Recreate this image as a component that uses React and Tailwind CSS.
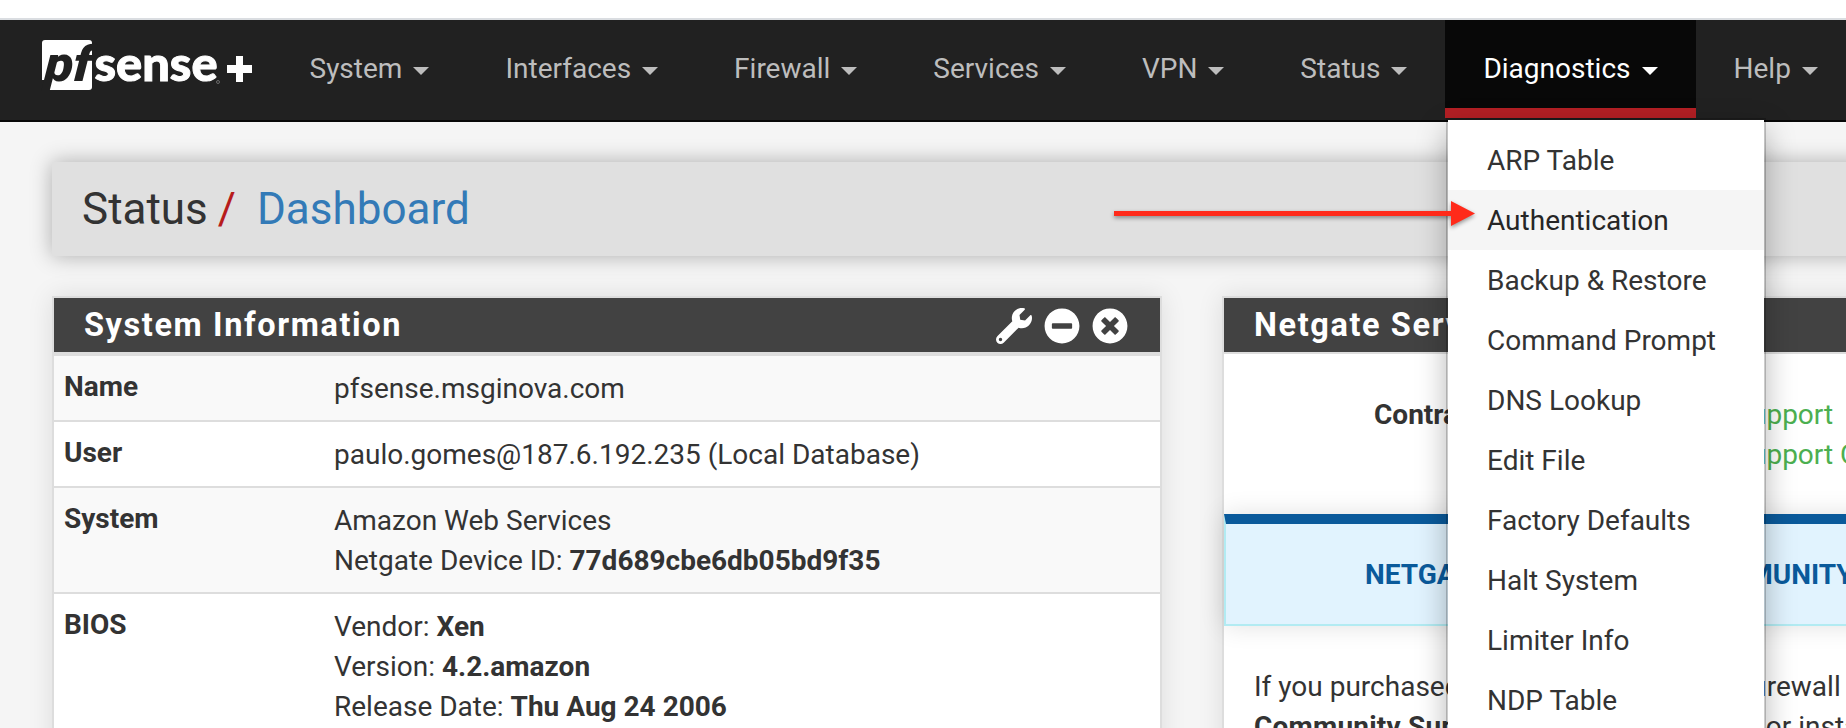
import { FaWrench, FaMinusCircle, FaTimesCircle } from "react-icons/fa";

const menu = [
  "ARP Table", "Authentication", "Backup & Restore", "Command Prompt", "DNS Lookup",
  "Edit File", "Factory Defaults", "Halt System", "Limiter Info", "NDP Table",
];

const nav = ["System", "Interfaces", "Firewall", "Services", "VPN", "Status", "Diagnostics", "Help"];

const Caret = () => (
  <span className="ml-[11px] mt-[4px] h-0 w-0 border-x-8 border-t-8 border-x-transparent border-t-current" />
);

function Logo() {
  return (
    <svg width="212" height="52" viewBox="0 0 212 52" className="mt-[19px] ml-[41px] shrink-0">
      <rect x="1" y="1" width="50" height="50" rx="3" fill="#fff" />
      <path d="M0 41 L5 41 L7 46 L6 52 L0 52 Z" fill="#212121" />
      <text transform="translate(3 42) skewX(-4)" fontFamily="Roboto, sans-serif" fontWeight="900" fontStyle="italic" fontSize="49" fill="#212121" textLength="47" lengthAdjust="spacingAndGlyphs">pf</text>
      <text x="53.500" y="42" fontFamily="Lato, sans-serif" fontWeight="900" fontSize="48" textLength="123" lengthAdjust="spacingAndGlyphs" fill="#fff" stroke="#fff" strokeWidth="1">sense</text>
      <circle cx="177" cy="43" r="1.5" fill="none" stroke="#999" strokeWidth=".6" />
      <path d="M186 30h25" stroke="#fff" strokeWidth="8" />
      <path d="M198.500 17v26" stroke="#fff" strokeWidth="7" />
    </svg>
  );
}

function Row({ label, children, shade }) {
  return (
    <div className={"flex border-t-2 border-[#ddd] pt-[11px] pb-[13px] " + (shade ? "bg-[#f9f9f9]" : "bg-white")}>
      <div className="w-[280px] shrink-0 pl-[10px] font-bold">{label}</div>
      <div className="pt-[2px] -mb-[2px]">{children}</div>
    </div>
  );
}

export default function App() {
  return (
    <div className="relative flex h-[728px] w-[1846px] flex-col overflow-hidden bg-[#f5f5f5] font-['Roboto',sans-serif] text-[28px] leading-[40px] text-[#333]">
      <div className="h-[20px] shrink-0 border-b-2 border-[#dadde1] bg-white" />
      <nav className="flex h-[102px] shrink-0 border-b-2 border-[#080808] bg-[#212121]">
        <Logo />
        <div className="ml-[18.5px] flex">
          {nav.map((n) => (
            <div
              key={n}
              className={
                "flex h-[98px] shrink-0 items-center border-b-10 px-[38px] pt-[10px] " +
                (n === "Diagnostics" ? "border-[#b31f24] bg-[#080808] text-white" : "border-transparent text-[#bdbdbd]")
              }
            >
              {n}
              <Caret />
            </div>
          ))}
        </div>
      </nav>

      <header className="mt-[40px] ml-[52px] flex h-[94px] w-[2200px] shrink-0 items-center bg-[#e0e0e0] pl-[30px] text-[44px] shadow-[0_0_20px_rgba(0,0,0,0.3)]">
        <span>Status</span>
        <span className="ml-[10px] text-[#b71c1c]">/</span>
        <span className="ml-[21px] text-[#337ab7]">Dashboard</span>
      </header>

      <main className="mt-[40px] ml-[52px] flex w-[2200px] items-start gap-[60px]">
        <section className="h-[500px] w-[1110px] shrink-0 border-2 border-[#ddd] bg-white shadow-[0_0_24px_rgba(0,0,0,0.1)]">
          <div className="flex h-[56px] items-center border-b-2 border-[#ddd] bg-[#424242] pl-[30px] pr-[32px] text-[32.5px] font-bold tracking-[1.600px] text-white">
            <h2 className="grow">System Information</h2>
            <div className="flex items-center gap-[12px] pt-[2px] text-[36px]">
              <FaWrench /><FaMinusCircle /><FaTimesCircle />
            </div>
          </div>
          <Row label="Name" shade>pfsense.msginova.com</Row>
          <Row label="User">paulo.gomes@187.6.192.235 (Local Database)</Row>
          <Row label="System" shade>
            <div>Amazon Web Services</div>
            <div>Netgate Device ID: <b>77d689cbe6db05bd9f35</b></div>
          </Row>
          <Row label="BIOS">
            <div>Vendor: <b>Xen</b></div>
            <div>Version: <b>4.2.amazon</b></div>
            <div>Release Date: <b>Thu Aug 24 2006</b></div>
          </Row>
        </section>

        <section className="h-[500px] w-[1000px] shrink-0 border-2 border-[#ddd] bg-white shadow-[0_0_24px_rgba(0,0,0,0.1)]">
          <h2 className="flex h-[56px] items-center border-b-2 border-[#ddd] bg-[#424242] pl-[30px] text-[32.5px] font-bold tracking-[1.600px] text-white">
            Netgate Services
          </h2>
          <div className="flex h-[160px] pt-[40px] whitespace-nowrap">
            <div className="w-[360px] shrink-0 pl-[150px] pt-[1px] font-bold">Contract type</div>
            <div className="pt-[1px] text-[#4caf50]">
              <div>Community Support</div>
              <div>Community Support Only</div>
            </div>
          </div>
          <div className="flex h-[112px] items-center border-2 border-t-10 border-[#b2ebf2] border-t-[#0a5a9b] bg-[#e1f3fe] pt-[2px] pl-[139px] font-bold whitespace-nowrap text-[#0a5a9b] shadow-[0_0_24px_rgba(0,0,0,0.12)]">
            <span>NETGATE AND pfSense</span>
            <span className="ml-[25px]">COMMUNITY</span>
          </div>
          <div className="pt-[41px] pl-[30px] whitespace-nowrap">
            <div className="flex"><span>If you purchased your pfSense gateway</span><span className="ml-[10px]">firewall</span></div>
            <div className="flex"><b className="tracking-[0.200px]">Community Support</b><span className="ml-[5px]">at the point of sale</span><span className="ml-[19px]">or installed</span></div>
          </div>
        </section>
      </main>

      <div className="absolute top-[118px] left-[1446px] w-[320px] border-2 border-black/20 bg-white bg-clip-padding py-[10px] pb-[60px] shadow-[0_12px_28px_rgba(0,0,0,0.28)]">
        {menu.map((m) => (
          <div key={m} className={"flex h-[60px] items-center pt-[2px] pl-[39px] " + (m === "Authentication" ? "bg-[#f5f5f5] text-[#262626]" : "")}>
            {m}
          </div>
        ))}
      </div>

      <svg className="absolute top-[194px] left-[1110px] drop-shadow-[0_2px_2px_rgba(0,0,0,0.4)]" width="370" height="40" viewBox="0 0 370 40">
        <path d="M4 17H341V7L365 19.500L341 32V22H4Z" fill="#ff2a1a" />
      </svg>
    </div>
  );
}
